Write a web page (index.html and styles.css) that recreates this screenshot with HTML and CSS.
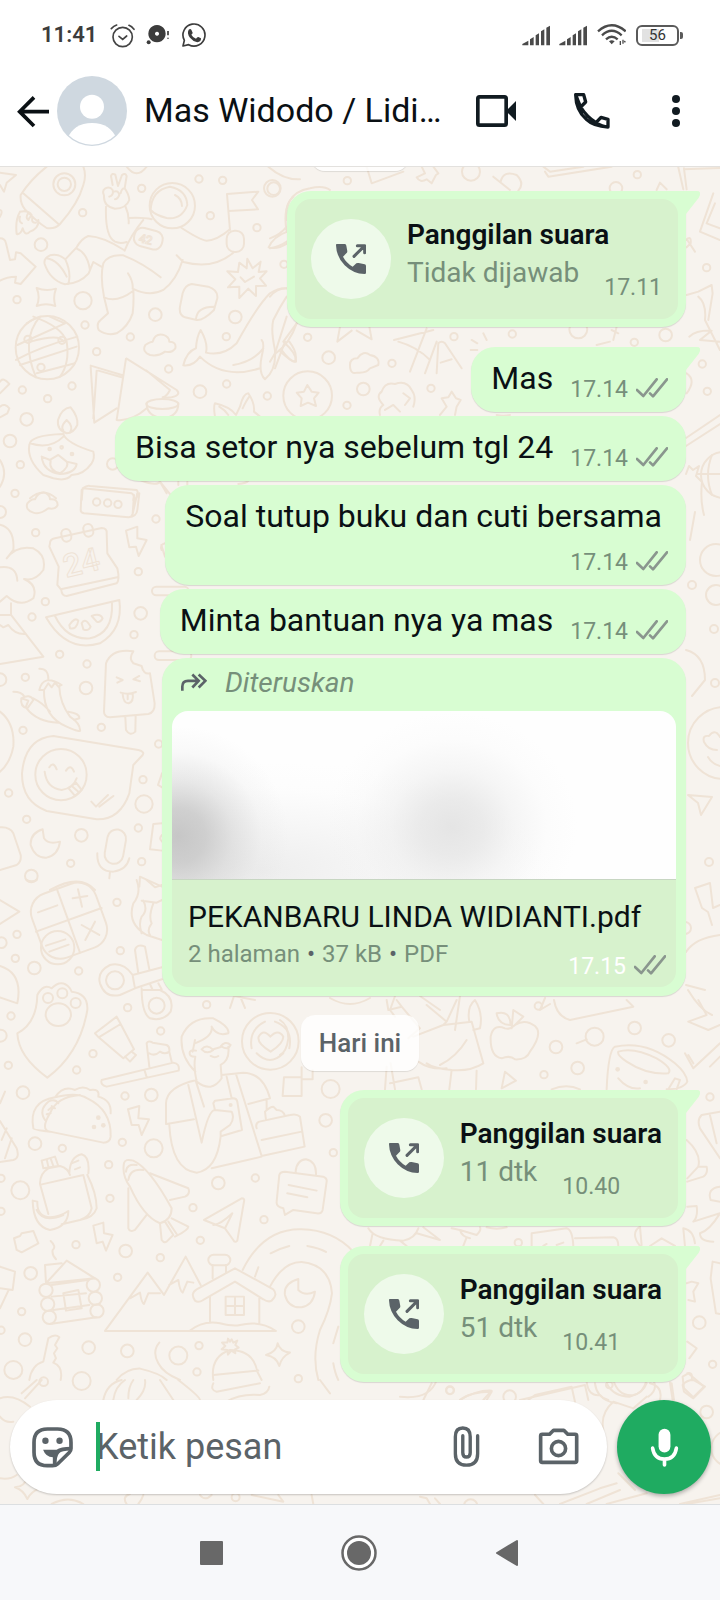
FILE: index.html
```html
<!DOCTYPE html>
<html lang="id">
<head>
<meta charset="utf-8">
<meta name="viewport" content="width=device-width, initial-scale=1">
<title>Mas Widodo</title>
<link rel="stylesheet" href="styles.css">
</head>
<body>
<svg class="defs" aria-hidden="true">
  <symbol id="ticks" viewBox="0 0 96 60"><path d="M3 36L22 54L62 4M42 46L51 55L93 4" fill="none" stroke="currentColor" stroke-width="8" stroke-linejoin="round" stroke-linecap="round"/></symbol>
  <symbol id="call" viewBox="0 0 90 90"><path d="M2 0H26Q31 0 31 5L34 22Q34 26 31 28L21 38Q31 57 50 68L61 58Q64 56 68 57L86 61Q90 62 90 66V86Q90 90 86 90Q52 90 26 64Q1 38 0 4Q0 0 2 0Z" fill="currentColor"/><path d="M54 37L84 7M64 5H86V26" fill="none" stroke="currentColor" stroke-width="9" stroke-linejoin="round" stroke-linecap="round"/></symbol>
  <symbol id="tail" viewBox="0 0 14 24"><path d="M0 0H11Q15 0 14 4Q13 7 11 9L0 23Z" fill="currentColor"/></symbol>
</svg>

<div class="status">
  <span class="clock">11:41</span>
  <svg class="s-alarm" viewBox="330 66 75 75"><g fill="none" stroke="#444" stroke-width="5" stroke-linecap="round"><circle cx="368" cy="108" r="29"/><path d="M357 106L368 115L380 105M334 83Q341 75 350 72M402 85Q395 76 387 73"/></g></svg>
  <svg class="s-chat" viewBox="438 66 75 75"><path fill-rule="evenodd" fill="#3c3c3c" d="M471 72A26 26 0 1 1 470.900 72ZM471 92A6 6 0 1 0 471.100 92Z"/><circle cx="446" cy="124" r="6" fill="#3c3c3c"/><path d="M504 90V103M504 110V113" stroke="#3c3c3c" stroke-width="5"/></svg>
  <svg class="s-wa" viewBox="543 63 78 78"><path fill="none" stroke="#3c3c3c" stroke-width="5" stroke-linejoin="round" d="M549 135L553 118A33 33 0 1 1 566 131Z"/><path fill="#3c3c3c" d="M566 86Q571 82 574 86L578 95Q578 98 574 101Q579 110 588 113Q592 107 595 108L603 112Q604 122 592 124Q580 122 570 110Q560 97 566 86Z"/></svg>
  <span class="grow"></span>
  <svg class="s-signal" viewBox="484 72 87 63"><path fill="#4a4a4a" d="M485 133V129L503 119V133ZM508 133V115L519 108V133ZM525 133V103L535 97V133ZM541 133V91L551 85V133ZM557 133V80L568 74V133Z"/></svg>
  <svg class="s-signal" viewBox="484 72 87 63"><path fill="#4a4a4a" d="M485 133V129L503 119V133ZM508 133V115L519 108V133ZM525 133V103L535 97V133ZM541 133V91L551 85V133ZM557 133V80L568 74V133Z"/></svg>
  <svg class="s-wifi" viewBox="711 72 87 72"><g fill="none" stroke="#4a4a4a" stroke-width="7"><path d="M714 97Q755 61 797 97M726 109Q755 82 785 109M738 121Q755 105 773 121"/><path d="M781 126V138M789 122V134M793 126L796 130" stroke-width="4"/></g><path fill="#4a4a4a" d="M747 127Q755 121 764 127L755 136Z"/></svg>
  <span class="battery"><span class="cell">56</span></span>
</div>

<header class="top">
  <button class="ib back" aria-label="Kembali"><svg viewBox="51 283 99 99"><path d="M102 290L59 333L102 376M58 333H147" fill="none" stroke="#0a1014" stroke-width="11"/></svg></button>
  <svg class="avatar" viewBox="0 0 210 210"><defs><clipPath id="disc"><circle cx="105" cy="105" r="101"/></clipPath></defs><circle cx="105" cy="105" r="105" fill="#cfd8e0"/><circle cx="105" cy="92" r="36" fill="#fff"/><path clip-path="url(#disc)" fill="#fff" d="M30 190Q50 141 105 141T180 190V210H30Z"/></svg>
  <h1>Mas Widodo / Lidi…</h1>
  <button class="ib video" aria-label="Panggilan video"><svg viewBox="348 285 120 96"><rect x="353.500" y="290.500" width="85" height="85" rx="5" fill="none" stroke="#111b21" stroke-width="11"/><path fill="#111b21" d="M440 331L468 303V363L440 335Z"/></svg></button>
  <button class="ib phone" aria-label="Panggilan suara"><svg viewBox="640 276 114 114"><path fill="none" stroke="#111b21" stroke-width="10" stroke-linejoin="round" d="M648 284H672L678 306L663 321Q655 304 648 284ZM663 321Q680 349 709 368M709 368L724 352L745 358V381Q728 380 709 368ZM648 284Q649 331 680 358Q702 379 745 381"/></svg></button>
  <button class="ib dots" aria-label="Menu"><svg viewBox="0 0 24 96"><g fill="#111b21"><circle cx="12" cy="12" r="12"/><circle cx="12" cy="48" r="12"/><circle cx="12" cy="84" r="12"/></g></svg></button>
</header>

<main class="chat">
  <svg class="doodles" viewBox="0 167 720 1337" preserveAspectRatio="xMidYMin slice" aria-hidden="true">
    <g transform="translate(0 160) scale(.3333)">
      <path d="M62 105Q90 60 140 20M62 105Q60 130 75 148Q110 185 140 204Q165 208 180 192Q235 130 250 75Q260 45 250 20M68 98L178 194M60 155Q85 150 95 165M60 155Q45 180 50 222Q62 225 68 205Q75 230 90 215Q118 205 115 180M85 158Q75 175 85 180Q92 165 98 170Q92 190 108 188M60 170Q55 185 66 190"/>
      <circle cx="193" cy="73" r="33"/><circle cx="193" cy="73" r="20"/>
      <path d="M0 38L48 45L20 68L12 95L0 75M0 150Q10 152 0 170M0 235Q15 235 18 250L30 300L45 298L48 277L62 280L107 320L62 372L45 368L48 350Q20 350 0 362M110 384Q138 395 168 386Q158 412 166 438Q138 428 110 438Q122 412 110 384Z"/>
      <path d="M338 75L333 48Q336 38 346 44L354 78L366 45Q376 38 380 48L374 85Q386 100 388 120Q378 146 345 146Q310 140 312 106Q305 92 316 85Q330 78 338 90Q342 105 328 110M342 95Q355 90 358 105Q352 118 345 118M362 100Q365 85 374 85M318 140Q315 230 345 245Q360 252 380 246M376 138Q388 165 386 190M388 174Q430 172 455 178M374 272Q390 230 430 180M545 204Q600 240 620 242Q650 242 690 208M700 278Q640 330 550 306L530 286M548 300Q530 360 490 390Q450 412 398 386Q400 365 384 340M400 388Q402 430 398 460Q385 500 350 520Q320 528 296 510Q288 490 302 480L324 460L312 410Q300 350 310 310Q325 282 370 286Q430 310 482 352M312 412Q350 430 398 394M372 270Q310 230 265 228Q245 235 230 262L196 298Q175 280 150 286Q130 295 134 312Q150 360 195 373Q240 370 266 340L280 306L304 320M196 298Q215 340 205 372M230 266Q262 278 270 330M140 295Q175 300 200 350"/>
      <circle cx="517" cy="137" r="68"/><path d="M452 150Q455 90 510 80Q560 90 562 135Q545 180 500 174Q465 165 452 150M525 105Q545 115 546 138"/>
      <rect x="402" y="208" width="86" height="56" rx="24" transform="rotate(15 445 236)"/>
      <path d="M690 210L681 102L775 95L756 120L774 148L686 153"/><rect x="680" y="212" width="52" height="64" rx="24"/>
      <path d="M742 296L758 325L782 305L776 336L800 334L780 355L798 377L768 378L768 408L745 386L718 414L718 380L684 382L706 358L682 334L714 336L718 308L740 325ZM722 352L735 366L762 350M575 372L625 380Q655 390 652 415L642 450Q610 482 590 480L555 472Q536 465 540 440L548 400Q555 375 575 372ZM588 478Q590 440 642 440"/>
      <circle cx="142" cy="563" r="95"/><path d="M80 490Q95 480 120 470Q60 540 108 652M100 470Q185 500 200 545Q210 610 180 650M150 470Q170 480 195 490M52 555L195 490M48 600Q120 560 232 530M60 615L230 560M110 640L225 610M92 545Q180 520 190 545"/><circle cx="84" cy="538" r="11"/><circle cx="186" cy="541" r="11"/><circle cx="123" cy="622" r="11"/>
      <path d="M450 585Q425 575 436 555Q450 545 458 545Q465 520 488 524Q508 530 508 545Q530 545 526 565Q515 580 495 575Q475 590 450 585ZM550 616Q560 575 588 565Q590 530 602 510Q625 550 618 578Q670 590 710 550Q770 440 810 400Q840 380 870 386M550 616Q580 620 600 590Q670 660 780 625M700 615Q760 605 790 565M785 540Q795 550 785 590Q775 640 795 658Q830 630 825 570Q812 510 820 480Q840 440 860 410M825 582Q870 550 890 490M842 575Q880 610 885 605Q895 580 868 545M806 262Q820 230 862 215M806 262Q830 270 862 250"/>
      <path d="M272 620L283 788L350 745M272 617L368 646M290 632L280 775M295 632L365 652M378 596L350 780Q395 785 440 745M380 596L530 690Q545 705 515 712L490 714M440 632L510 690Q500 710 488 712M440 730Q440 770 490 775Q535 770 535 730"/><ellipse cx="487" cy="732" rx="48" ry="15"/>
      <path d="M200 820Q170 810 174 780Q185 745 212 742Q235 770 232 795Q220 820 200 820M190 812Q180 800 200 780Q222 800 210 818M88 855Q90 825 190 822Q200 850 280 875Q285 895 275 910Q250 945 215 945Q200 965 160 955L130 945Q80 900 88 855ZM90 850Q150 870 190 830M125 890L150 900L175 885L200 905L230 912Q225 940 180 942Q130 935 125 890M152 902Q145 930 180 940Q210 920 200 905"/><circle cx="149" cy="867" r="4"/><circle cx="185" cy="862" r="4"/><circle cx="216" cy="882" r="4"/>
      <path d="M645 770Q640 740 645 730Q690 740 708 765L720 740Q730 700 745 700Q765 730 762 755L780 770M658 740Q675 750 685 765M728 745Q740 720 748 710M0 665Q10 650 28 672L0 700M0 740Q15 728 28 745L22 760L0 772M0 900Q25 940 0 980M380 20Q410 60 440 20M805 20Q850 60 900 58M860 180Q855 130 880 110"/>
      <path d="M245 1020L248 985Q262 975 270 978L410 990Q420 1000 405 1020M250 985L395 1000Q405 1005 400 1020M90 1015Q130 980 168 1015M420 960Q470 980 480 965L500 1000M480 965L512 1005M535 965V975M562 965V975M715 972Q740 970 745 962"/>
      <g><circle cx="425" cy="85" r="11"/><circle cx="597" cy="57" r="11"/><circle cx="668" cy="61" r="11"/><circle cx="821" cy="86" r="19"/><circle cx="248" cy="158" r="11"/><circle cx="631" cy="167" r="11"/><circle cx="771" cy="203" r="11"/><circle cx="123" cy="254" r="19"/><circle cx="249" cy="422" r="26"/><circle cx="51" cy="419" r="11"/><circle cx="466" cy="464" r="19"/><circle cx="706" cy="471" r="19"/><circle cx="255" cy="495" r="11"/><circle cx="391" cy="531" r="11"/><circle cx="290" cy="575" r="11"/><circle cx="679" cy="530" r="11"/><circle cx="506" cy="627" r="11"/><circle cx="216" cy="678" r="11"/><circle cx="67" cy="690" r="11"/><circle cx="143" cy="716" r="11"/><circle cx="600" cy="695" r="19"/><circle cx="680" cy="672" r="11"/><circle cx="802" cy="708" r="11"/><circle cx="80" cy="778" r="19"/><circle cx="30" cy="843" r="19"/><circle cx="61" cy="914" r="11"/><circle cx="338" cy="912" r="17"/><circle cx="852" cy="313" r="11"/></g>
    </g>
    <text x="139" y="244" font-size="12" transform="rotate(12 148 239)">42</text>
    <g transform="translate(0 490) scale(.3333)">
      <path d="M100 68Q75 60 82 40Q95 25 105 28Q115 5 135 8Q150 15 150 28Q172 25 173 45Q165 60 145 55Q120 75 100 68ZM245 0L242 60Q242 68 252 70L385 82Q395 82 398 72L412 10M385 82Q410 80 412 60L418 10M398 72L402 15"/><circle cx="290" cy="36" r="11"/><circle cx="323" cy="39" r="11"/><circle cx="354" cy="43" r="11"/>
      <path d="M0 104Q45 115 40 180L20 205Q50 165 100 175Q140 195 130 240Q105 275 72 267Q115 285 100 325Q60 355 20 318L0 335M0 232Q50 225 52 272M33 340V375L130 500L0 522M33 375H0M0 405L10 412L25 405Q45 435 78 432"/>
      <path d="M150 160Q150 148 165 145L305 114Q322 115 320 130L322 190L352 235Q360 270 350 280L200 318Q185 318 184 300L172 285L176 230L148 170ZM182 298L352 262"/><rect x="185" y="117" width="28" height="38" rx="14" transform="rotate(-12 199 136)"/><rect x="251" y="102" width="28" height="38" rx="14" transform="rotate(-12 265 121)"/>
      <path d="M378 122L412 110V145L440 150L416 198L408 170L388 172ZM138 382L358 330Q370 420 300 460Q200 490 138 382ZM165 378Q200 450 270 445Q340 430 336 340M208 405Q225 380 235 392Q230 420 210 415ZM245 400Q255 380 272 410Q265 425 250 418ZM275 378Q300 368 308 385Q300 400 290 395ZM484 165L495 200M485 180Q478 165 495 160"/>
      <rect x="456" y="290" width="110" height="26" rx="13"/><rect x="464" y="484" width="110" height="26" rx="13"/>
      <path d="M312 665L318 520Q335 475 400 484Q385 505 400 520L425 528Q430 555 450 550L464 640Q465 668 445 672L330 682Q312 680 312 665ZM376 682L378 720Q390 740 406 725L407 678M350 562L368 570L352 578M418 558L400 568L420 574M362 608Q385 615 408 606M368 612Q370 640 386 640Q402 635 398 610M383 612V628"/>
      <path d="M40 605Q65 605 72 618M118 536Q145 535 145 568M118 600Q130 550 185 585L175 590L165 578L155 592L145 580L132 600ZM132 600Q130 680 200 710Q245 730 240 720Q240 700 210 680Q180 640 178 592M64 625Q90 610 100 630L82 655Q60 650 64 625M80 655Q110 695 175 698M100 625Q130 640 150 665M205 665Q240 670 238 685L222 690M64 625L85 632L78 650"/>
      <path d="M160 738L415 780Q435 785 428 795L400 825L388 910Q360 990 290 988L140 963Q65 935 66 850Q75 745 160 738ZM274 935L288 950L324 915M298 950L340 918M134 845Q140 895 185 900Q220 895 230 865M148 832Q160 812 170 838M198 842Q212 820 222 845M206 895L228 878L245 900L225 918ZM218 890L235 905"/><circle cx="183" cy="854" r="77"/>
      <path d="M128 1018Q90 1030 92 1065Q105 1105 140 1103Q175 1095 180 1055Q145 1065 132 1045ZM328 1165L330 1145M292 1090Q290 1145 340 1145Q380 1140 388 1105M486 1000L460 1002L450 1078L486 1082M486 1035Q475 1045 486 1055M418 1190L420 1160L486 1190M150 1200Q240 1150 285 1200M0 665Q45 700 40 770Q30 820 0 845M0 1012Q30 1010 40 1030L62 1095Q65 1115 50 1125L0 1140M486 850L474 885L486 892"/><rect x="318" y="1018" width="56" height="104" rx="28" transform="rotate(10 346 1070)"/>
      <g><circle cx="45" cy="10" r="11"/><circle cx="107" cy="128" r="11"/><circle cx="136" cy="335" r="11"/><circle cx="96" cy="381" r="11"/><circle cx="422" cy="370" r="19"/><circle cx="468" cy="87" r="11"/><circle cx="415" cy="245" r="11"/><circle cx="402" cy="434" r="11"/><circle cx="179" cy="493" r="11"/><circle cx="261" cy="522" r="11"/><circle cx="76" cy="562" r="11"/><circle cx="0" cy="569" r="19"/><circle cx="0" cy="66" r="18"/><circle cx="258" cy="594" r="19"/><circle cx="69" cy="721" r="11"/><circle cx="304" cy="712" r="11"/><circle cx="476" cy="762" r="11"/><circle cx="429" cy="869" r="11"/><circle cx="26" cy="909" r="11"/><circle cx="432" cy="942" r="26"/><circle cx="80" cy="988" r="11"/><circle cx="244" cy="1036" r="19"/><circle cx="415" cy="1014" r="11"/><circle cx="212" cy="1120" r="11"/><circle cx="425" cy="1115" r="11"/><circle cx="94" cy="1158" r="19"/></g>
    </g>
    <text x="63" y="573" font-size="32" transform="rotate(-14 84 562)">24</text>
    <g transform="translate(0 880) scale(.3333)">
      <rect x="105" y="20" width="204" height="204" rx="58" transform="rotate(-20 207 122)"/><path d="M170 25L240 218M108 155L305 84M114 97L172 76M218 55L262 48M234 28L246 80M245 135L298 165M285 125L256 180M138 197L196 178M148 215L206 194"/><circle cx="173" cy="203" r="50"/>
      <path d="M410 0Q425 40 400 70Q380 130 440 165L486 180M425 62L470 68L486 60M430 62Q445 90 425 110Q415 130 425 160M460 70Q445 110 455 130Q440 150 450 165M0 60L58 95L0 132M0 258Q70 280 52 370L0 352M80 0Q95 8 110 0M440 0L465 22L486 15"/>
      <path d="M52 460Q110 430 112 345Q130 310 155 325Q185 295 210 325L215 335Q265 340 262 390Q240 520 142 593Q55 530 52 460Z"/><ellipse cx="175" cy="404" rx="38" ry="34"/><circle cx="144" cy="354" r="15"/><circle cx="187" cy="340" r="15"/><circle cx="227" cy="369" r="15"/>
      <circle cx="345" cy="301" r="27"/><path d="M398 285Q370 245 330 255Q290 275 300 310Q315 355 360 345L405 325Q400 300 398 285L486 262M405 325L486 298M415 280L405 210Q410 190 435 200L448 268M425 325Q425 400 450 415Q490 425 512 395Q525 350 480 330L430 330M450 312L458 330M475 310L485 328"/><circle cx="470" cy="377" r="24"/>
      <path d="M285 460L350 410L362 432L296 472ZM296 472L370 535L402 508L362 432M375 530L390 545L408 525L395 515M305 600L520 548Q540 550 536 572L320 620Q300 615 305 600ZM434 572L440 592M448 560L440 490Q445 480 458 488L500 495Q510 500 508 515L515 545M448 520Q465 530 480 515Q495 525 508 515"/>
      <path d="M586 575Q540 530 545 470Q570 410 640 415Q690 440 685 460Q650 470 635 440Q640 470 585 490M585 480L578 515M590 605Q580 560 586 530Q565 530 570 515Q575 508 588 512M590 605Q635 640 665 595L662 555M662 555Q690 540 685 500M605 508Q620 490 640 510Q620 525 605 508M640 508L660 502Q675 480 692 495Q685 512 665 500M632 528Q645 535 655 528M590 600Q500 620 498 670V732M565 615L605 788M588 605L612 680M500 732L582 718M508 735Q515 870 590 878Q650 870 662 770M605 788Q625 690 645 690L640 670L645 662L700 655Q710 655 712 665L726 750L665 768M645 690L695 695Q705 715 690 735L662 755V770M680 590L695 655M665 585L730 578Q790 580 810 655L745 672M708 582L785 828L914 800L900 710Q890 700 870 705L778 725Q765 730 770 745M785 780L905 755M798 720L795 695Q810 680 820 680L830 690Q850 690 855 708M635 865L785 830M800 662V690"/><circle cx="692" cy="675" r="3"/>
      <circle cx="811" cy="484" r="85"/><path d="M812 515Q770 490 776 470Q790 445 811 470Q835 445 850 470Q850 490 812 515ZM755 505Q745 450 795 425M825 425Q880 445 868 505M770 520Q810 560 850 520M852 592H905V648H848ZM905 600V562M905 598H938V570"/>
      <path d="M100 745Q85 665 165 652Q230 635 262 655Q335 690 332 770Q330 788 310 788L150 755Q100 750 100 745ZM150 755Q120 750 150 700Q170 650 240 645M165 652Q190 615 225 630Q250 615 270 630Q300 625 295 650Q335 660 332 700M135 720Q115 690 145 665Q165 655 175 670M145 690L155 682M140 703L152 700M155 678L165 685"/><g class="solid"><circle cx="295" cy="713" r="7"/><circle cx="310" cy="736" r="7"/><circle cx="282" cy="741" r="7"/></g>
      <path d="M384 688L418 678L415 715L447 718L425 765L416 735L395 735ZM0 723L50 805Q60 835 40 840L0 846M20 745L5 780M35 775L15 835M120 910Q120 880 145 865L180 858Q205 865 210 885M120 912L145 1002M122 914L250 885L275 985Q270 1010 240 1020L185 1033M125 842L130 865M125 842L165 830L175 858L130 865M140 838L145 860M152 835L160 858M208 880Q210 830 245 823Q270 830 265 880M215 850L235 842M225 868L240 862M262 885Q290 940 290 985Q280 1015 240 1020M98 962L112 965Q110 1010 150 1012Q180 1010 205 993Q205 1040 150 1050Q100 1040 98 962M110 990Q130 1030 190 1005M280 1037L310 1028L312 1060L338 1065L318 1112L308 1085L290 1090ZM42 1075L60 1068L65 1060L100 1053L115 1090L65 1117L50 1110Z"/>
      <path d="M372 850Q375 835 400 842Q450 865 515 985Q515 1020 480 1030Q430 1010 390 920Q365 885 372 850ZM378 875Q380 850 410 855M385 900Q390 865 430 870M450 880L565 925Q572 942 555 950L510 960M385 925V1045Q390 1058 405 1050L440 1005M480 1030L485 1080Q492 1090 500 1085L520 1065L495 1025M515 1015L565 1040Q565 1050 525 1070M505 1025L530 1062M612 1020L725 955Q735 955 732 965L712 1082Q705 1090 700 1080L675 1045ZM675 1045Q690 1015 697 1000Q660 1035 640 1035M838 885Q840 875 855 875L970 890Q982 895 980 905L968 990Q965 1002 950 1000L880 990L855 1005L850 985Q828 980 830 965ZM887 875Q890 840 918 838Q950 845 948 885M866 915L950 932M862 940L922 952"/>
      <path d="M152 1083Q170 1100 158 1110Q155 1125 168 1138M138 1210L135 1155L185 1150M138 1210L200 1142L285 1195ZM155 1215L262 1200M155 1250L258 1240M160 1290L268 1275M150 1332L290 1312M190 1240L235 1230L245 1285L198 1292Z"/><circle cx="138" cy="1231" r="20"/><circle cx="143" cy="1273" r="20"/><circle cx="148" cy="1312" r="20"/><circle cx="280" cy="1215" r="20"/><circle cx="286" cy="1255" r="20"/><circle cx="291" cy="1293" r="20"/>
      <path d="M315 1353H826M315 1353L443 1178L492 1245L557 1130L602 1215M390 1255L420 1238Q425 1270 432 1272L445 1240L480 1240M508 1215L535 1200Q540 1235 548 1238L562 1205L580 1208M585 1262Q570 1240 590 1228L705 1165L820 1228Q835 1245 815 1262Q805 1268 790 1258L705 1205L610 1260Q595 1270 585 1262ZM630 1250V1325M778 1250V1330M568 1353Q610 1320 660 1330Q700 1340 720 1335Q780 1320 828 1353M638 1195V1155M678 1180V1155M677 1250H732V1305H677ZM705 1250V1305M677 1278H732"/><rect x="625" y="1124" width="66" height="32" rx="16"/>
      <path d="M728 1170Q790 1045 905 1048Q1000 1050 1060 1115M765 1190L775 1162M812 1120Q840 1105 868 1098M922 1098Q960 1105 978 1116M810 1220Q850 1145 905 1146Q990 1155 996 1240Q990 1290 960 1350Q935 1430 955 1500M1015 1340L1000 1390M1000 1450Q1005 1480 1015 1500M895 1197Q850 1210 855 1245Q865 1285 905 1282Q940 1275 945 1235Q915 1250 895 1230ZM833 1390Q840 1415 870 1418Q845 1430 838 1458Q830 1430 798 1425Q830 1415 833 1390ZM640 1500Q630 1430 690 1410Q760 1410 772 1475L785 1500M640 1485L775 1472M0 1160L45 1175L38 1230L0 1225M25 1232L0 1285M690 1385L695 1378L700 1388L712 1382L706 1395L716 1403L705 1408L706 1420L694 1412L684 1424L682 1410L665 1408L676 1398L666 1388L682 1388L684 1376ZM145 1375Q165 1360 178 1372L165 1395L172 1405L162 1420L168 1435L160 1448Q190 1460 182 1500M145 1375L130 1445Q95 1455 88 1500M350 1500Q380 1465 420 1466Q480 1480 500 1500M478 1388Q455 1415 475 1450Q490 1480 540 1500M15 635L0 670"/>
      <g><circle cx="351" cy="67" r="11"/><circle cx="51" cy="163" r="11"/><circle cx="4" cy="188" r="16"/><circle cx="46" cy="235" r="11"/><circle cx="103" cy="264" r="19"/><circle cx="236" cy="273" r="11"/><circle cx="361" cy="212" r="11"/><circle cx="383" cy="383" r="11"/><circle cx="33" cy="408" r="11"/><circle cx="482" cy="453" r="11"/><circle cx="620" cy="374" r="11"/><circle cx="2" cy="467" r="18"/><circle cx="25" cy="556" r="11"/><circle cx="279" cy="521" r="11"/><circle cx="230" cy="570" r="11"/><circle cx="69" cy="638" r="19"/><circle cx="454" cy="645" r="19"/><circle cx="375" cy="648" r="11"/><circle cx="105" cy="791" r="19"/><circle cx="187" cy="805" r="11"/><circle cx="461" cy="805" r="27"/><circle cx="367" cy="787" r="11"/><circle cx="326" cy="854" r="11"/><circle cx="61" cy="931" r="27"/><circle cx="330" cy="955" r="11"/><circle cx="655" cy="909" r="19"/><circle cx="766" cy="894" r="11"/><circle cx="992" cy="627" r="27"/><circle cx="977" cy="721" r="19"/><circle cx="1000" cy="818" r="11"/><circle cx="792" cy="1019" r="11"/><circle cx="579" cy="983" r="11"/><circle cx="601" cy="1081" r="11"/><circle cx="228" cy="1094" r="11"/><circle cx="377" cy="1113" r="19"/><circle cx="481" cy="1133" r="11"/><circle cx="92" cy="1180" r="19"/><circle cx="353" cy="1192" r="11"/><circle cx="65" cy="1295" r="11"/><circle cx="3" cy="1351" r="11"/><circle cx="75" cy="1379" r="19"/><circle cx="266" cy="1403" r="19"/><circle cx="382" cy="1413" r="19"/><circle cx="535" cy="1427" r="27"/><circle cx="597" cy="1397" r="11"/><circle cx="591" cy="1476" r="11"/><circle cx="40" cy="1470" r="27"/><circle cx="895" cy="1340" r="19"/><circle cx="3" cy="895" r="11"/><circle cx="3" cy="994" r="11"/></g>
    </g>
    <g transform="translate(270 160) scale(.3333)">
      <path d="M290 20L305 70L400 35M455 20L465 40L440 52Q450 70 470 58L485 70L498 45L505 40L490 20M825 35L835 50L1025 20M820 20L840 35L940 20M670 50L720 90M692 65Q700 30 740 45Q765 70 745 92M1225 22L1240 88M1242 25L1250 88M1242 28L1350 24M1160 90L1170 68L1190 88M1330 100L1290 215L1350 240M1335 130L1310 190L1350 205M1248 240Q1265 225 1262 250L1250 262M1252 240L1275 275M50 215Q30 100 120 85Q160 75 180 90M0 235Q30 225 50 200M0 265Q30 260 50 245M0 410Q20 385 50 385M50 470L15 580L0 605M80 490L40 545Q80 580 78 605Q60 605 35 570M210 500L202 545L245 512M260 512L305 538L298 500M45 545L15 625M1250 405L1285 395L1325 375L1328 400L1315 480M1285 410Q1310 430 1305 480L1350 570M1258 530Q1280 510 1325 512L1290 540L1350 545M1025 510L1045 520M1030 540L1040 500M980 555L1020 545M605 540L622 550M640 520L650 540M602 570L622 570"/>
      <path d="M372 540L490 510M385 545Q440 560 480 600M420 635L470 505M465 640L500 545M500 640L505 550Q515 540 525 550L575 625M512 608L545 598M240 615Q240 595 262 595Q280 570 300 585Q330 590 325 615L300 625Q290 640 262 638Q240 645 240 615ZM112 675L125 695L146 698L132 715L138 738L114 728L92 738L95 715L80 698L102 695Z"/><circle cx="113" cy="707" r="73"/>
      <path d="M330 765Q325 745 340 735Q315 710 335 695Q345 665 375 672Q410 660 425 690Q440 710 430 740M345 750L370 735L390 755M400 700L420 715L405 735M510 765L530 740L515 715L535 712L545 695L558 715L572 720L560 740L555 765M1250 640Q1280 660 1250 700M680 765Q700 770 720 765"/><circle cx="7" cy="85" r="25"/>
      <g><circle cx="232" cy="62" r="11"/><circle cx="603" cy="35" r="27"/><circle cx="1102" cy="44" r="11"/><circle cx="1038" cy="85" r="19"/><circle cx="113" cy="532" r="11"/><circle cx="176" cy="593" r="19"/><circle cx="552" cy="530" r="11"/><circle cx="727" cy="522" r="11"/><circle cx="925" cy="508" r="27"/><circle cx="1187" cy="525" r="19"/><circle cx="1093" cy="547" r="11"/><circle cx="280" cy="687" r="19"/><circle cx="366" cy="610" r="11"/><circle cx="483" cy="685" r="11"/><circle cx="231" cy="736" r="11"/><circle cx="1297" cy="612" r="11"/><circle cx="1312" cy="694" r="11"/><circle cx="1310" cy="323" r="11"/></g>
    </g>
    <g class="thin">
      <path d="M686 438L720 415M686 446L720 424M686 474L689 466L693 470L699 466L696 476L702 482Q700 500 704 515M690 540L695 512M712 455Q704 475 712 495M698 474H720M686 650Q705 655 705 680L692 696M704 742Q702 735 709 736Q715 728 720 737M704 742Q708 750 717 750M708 757Q712 764 720 766M688 795L712 797L701 815L698 803ZM695 888L710 883L713 908L720 905M695 888L702 908L708 912L712 925M686 952Q695 938 720 935M686 985L705 990M688 990Q700 1010 712 1015"/>
      <circle cx="724" cy="475" r="23"/><circle cx="716" cy="560" r="16"/><circle cx="716" cy="595" r="10"/><circle cx="724" cy="743" r="36"/>
      <circle cx="692" cy="585" r="4"/><circle cx="714" cy="629" r="4"/><circle cx="715" cy="683" r="4"/><circle cx="709" cy="862" r="4"/><circle cx="685" cy="928" r="6"/>
      <path d="M230 1008L234 996L255 1000M240 996L245 1008M330 998Q350 1010 370 998M395 996L390 1010M420 996L440 1010M460 996L455 1030M545 998L540 1010L550 1004"/>
    </g>
    <g transform="translate(280 1000) scale(.3333)">
      <path d="M0 60Q25 75 25 115Q20 155 0 165M320 0L325 30L365 20L350 0M330 30L345 50M365 20L420 85L385 115M440 15L500 65L530 0M500 65L490 75L400 110M415 185Q450 210 500 205M490 75L575 65L610 190Q570 215 515 210Q460 205 440 190M560 120Q530 170 480 195M515 210L508 268M590 212L588 268M568 65Q560 20 585 0Q610 40 600 85L580 90M332 190L345 268M330 250L415 232L425 268M320 200L315 268M675 85Q640 70 632 110Q630 170 665 175Q690 165 705 178Q740 180 750 155Q790 100 765 78Q735 55 705 75Q690 90 675 85ZM695 85L700 30L730 50L705 75M650 40Q690 30 692 75Q655 75 650 40ZM665 265L675 215L708 242ZM822 0Q830 50 870 60L1060 20L1040 0M980 268Q985 150 1005 140Q1100 120 1185 190Q1220 220 1222 245Q1210 268 1160 268M1015 155Q1060 140 1130 175Q1180 205 1165 220Q1100 225 1040 185Q1010 165 1015 155ZM1015 235Q1045 270 1080 265M1165 268L1185 235L1200 240L1190 268M890 130L920 118M1215 160L1240 205L1320 130M1240 190L1225 165M1290 200L1320 170M1225 65L1285 90L1320 75M1225 65L1280 45L1255 0M815 268Q860 250 900 268"/>
      <g class="solid"><circle cx="1013" cy="208" r="7"/><circle cx="1097" cy="246" r="7"/></g>
      <path d="M1320 335L1265 345Q1250 360 1260 385L1320 475M1290 345L1310 430M1220 420Q1265 460 1255 500L1222 535M1255 500L1280 500Q1285 520 1270 530L1222 545M1320 560Q1280 565 1292 600L1320 605M1222 620L1250 618Q1255 650 1240 665L1320 640Q1290 690 1260 700Q1260 725 1300 725M1080 738Q1050 700 1080 680L1085 735M1110 738L1145 715L1185 738M1215 738L1210 685Q1240 690 1245 730M755 738V700L860 685Q878 690 880 738M885 715L1000 712Q1015 715 1015 738M790 738L800 732M830 735L850 728M265 685Q285 720 370 722Q405 715 415 685M270 738L278 700M300 738L310 722M360 722L380 738M430 682L480 720L410 700M515 685L540 690L590 705Q605 690 600 682M540 690Q545 710 570 715M550 738L560 712M620 682Q650 690 680 682M1320 790L1298 785L1292 835L1308 940L1320 942M1220 850L1235 845L1255 850L1240 875L1245 905L1225 900M1222 1025L1250 1045L1228 1075M1208 1130L1225 1120L1272 1160L1240 1192L1212 1165ZM1222 1120Q1240 1115 1235 1140"/>
      <g><circle cx="775" cy="18" r="11"/><circle cx="1064" cy="84" r="19"/><circle cx="1166" cy="121" r="19"/><circle cx="944" cy="110" r="27"/><circle cx="828" cy="141" r="19"/><circle cx="893" cy="204" r="19"/><circle cx="792" cy="224" r="11"/><circle cx="1290" cy="291" r="11"/><circle cx="1258" cy="968" r="19"/><circle cx="1298" cy="1093" r="11"/><circle cx="715" cy="728" r="11"/><circle cx="510" cy="1171" r="11"/><circle cx="55" cy="1136" r="11"/></g>
      <path d="M540 1200Q590 1170 635 1172L610 1200M720 1200L915 1155L925 1200M980 1150Q1000 1190 1050 1190Q1090 1180 1100 1150M945 1150Q950 1190 985 1200M1110 1150Q1150 1160 1140 1200M1170 1148L1178 1200M455 1150L430 1200"/>
    </g>
    <g transform="translate(0 1380) scale(.3333)">
      <path d="M75 55L125 0M65 40L110 0M0 55Q40 40 90 80M0 295Q30 300 50 285M0 110Q15 130 40 125M310 60Q320 10 365 0M340 60Q345 20 375 0M385 55Q385 20 400 0M410 60Q440 30 435 0M480 0L520 60M535 0Q600 50 600 60M640 10Q630 30 650 35L780 10M680 65Q720 40 780 45Q805 40 808 20M45 322Q75 320 82 290Q90 320 120 325Q92 335 82 357Q70 330 45 322ZM155 372Q205 345 250 372M380 372Q365 350 390 342M430 345Q425 360 415 372M755 345L850 365L835 345M935 345L940 372M960 0L990 40M600 345Q615 365 635 345"/><circle cx="131" cy="5" r="13"/><circle cx="245" cy="3" r="27"/><circle cx="707" cy="352" r="12"/>
    </g>
    <g transform="translate(400 1380) scale(.3333)">
      <path d="M0 50Q90 60 110 0M180 60Q210 35 275 35L260 60M385 60L405 45L515 20L525 65M560 5Q565 50 600 45Q615 65 650 70M640 0Q655 50 700 45Q730 40 740 0M760 0Q775 30 745 50M610 150Q600 100 640 65L700 85L740 50M655 280L705 330M650 310L600 325L480 372M660 330L560 372M620 372L740 340M405 345L430 372M840 372L960 345M860 372L960 355M815 10L822 60M848 15Q860 0 880 0L915 20L880 55L852 35ZM60 350L80 355L90 372M120 372L105 355"/><circle cx="150" cy="31" r="12"/><circle cx="329" cy="50" r="19"/><circle cx="920" cy="96" r="19"/><circle cx="628" cy="15" r="10"/><circle cx="988" cy="205" r="54"/><circle cx="212" cy="378" r="20"/>
    </g>
  </svg>

  <div class="chip chip-cut" aria-hidden="true"></div>

  <div class="messages">
    <section class="msg call tailed">
      <svg class="tail"><use href="#tail"/></svg>
      <div class="card">
        <span class="disc"><svg><use href="#call"/></svg></span>
        <div class="info"><strong>Panggilan suara</strong><div class="line"><span class="sub">Tidak dijawab</span><time>17.11</time></div></div>
      </div>
    </section>
    <section class="msg text spaced tailed">
      <svg class="tail"><use href="#tail"/></svg>
      <p>Mas</p><span class="meta"><time>17.14</time><svg class="ticks"><use href="#ticks"/></svg></span>
    </section>
    <section class="msg text">
      <p>Bisa setor nya sebelum tgl 24</p><span class="meta"><time>17.14</time><svg class="ticks"><use href="#ticks"/></svg></span>
    </section>
    <section class="msg text long">
      <p>Soal tutup buku dan cuti bersama</p><span class="meta"><time>17.14</time><svg class="ticks"><use href="#ticks"/></svg></span>
    </section>
    <section class="msg text">
      <p>Minta bantuan nya ya mas</p><span class="meta"><time>17.14</time><svg class="ticks"><use href="#ticks"/></svg></span>
    </section>
    <section class="msg doc">
      <div class="fwd"><svg viewBox="0 0 78 56"><path d="M4 53V40Q4 23 21 23H52M34 4L53 23L34 43M53 4L73 23L53 43" fill="none" stroke="#5b6368" stroke-width="8"/></svg><em>Diteruskan</em></div>
      <div class="preview"></div>
      <div class="file">
        <div class="name">PEKANBARU LINDA WIDIANTI.pdf</div>
        <div class="fline"><span class="fsub">2 halaman <b>•</b> 37 kB <b>•</b> PDF</span><span class="meta"><time>17.15</time><svg class="ticks"><use href="#ticks"/></svg></span></div>
      </div>
    </section>
    <div class="chip">Hari ini</div>
    <section class="msg call tailed">
      <svg class="tail"><use href="#tail"/></svg>
      <div class="card">
        <span class="disc"><svg><use href="#call"/></svg></span>
        <div class="info"><strong>Panggilan suara</strong><div class="line"><span class="sub">11 dtk</span><time>10.40</time></div></div>
      </div>
    </section>
    <section class="msg call spaced tailed">
      <svg class="tail"><use href="#tail"/></svg>
      <div class="card">
        <span class="disc"><svg><use href="#call"/></svg></span>
        <div class="info"><strong>Panggilan suara</strong><div class="line"><span class="sub">51 dtk</span><time>10.41</time></div></div>
      </div>
    </section>
  </div>

  <form class="composer">
    <div class="pill">
      <button type="button" class="ib sticker" aria-label="Stiker"><svg viewBox="95 143 122 122"><path fill="none" stroke="#5b6368" stroke-width="11" stroke-linejoin="round" d="M156 258H140Q101 258 101 218V189Q101 149 141 149H171Q211 149 211 189V207Q211 214 206 219L171 253Q166 258 156 258Z"/><circle cx="135" cy="184" r="9.500" fill="#5b6368"/><circle cx="177" cy="184" r="9.500" fill="#5b6368"/><path fill="#5b6368" d="M128 211H168Q180 202 211 202V213Q183 213 176 221Q168 228 168 258H157V233Q136 233 128 211Z"/></svg></button>
      <div class="field"><span class="caret"></span><input type="text" aria-label="Pesan" placeholder="Ketik pesan"></div>
      <button type="button" class="ib clip" aria-label="Lampirkan"><svg viewBox="160 140 80 122"><path fill="none" stroke="#5b6368" stroke-width="10" stroke-linecap="round" d="M233 169V222Q233 256 200 256Q167 256 167 222V172Q167 146 189 146Q211 146 211 172V219Q211 232 200 232Q189 232 189 219V169"/></svg></button>
      <button type="button" class="ib camera" aria-label="Kamera"><svg viewBox="415 148 124 112"><path fill="none" stroke="#5b6368" stroke-width="11" stroke-linejoin="round" d="M428 167H450L462 155H493L505 167H527Q532 167 532 172V247Q532 252 527 252H428Q423 252 423 247V172Q423 167 428 167Z"/><circle cx="477" cy="210" r="21.500" fill="none" stroke="#5b6368" stroke-width="11"/></svg></button>
    </div>
    <button type="button" class="mic" aria-label="Pesan suara"><svg viewBox="748 142 88 118"><rect x="774" y="144" width="36" height="72" rx="18" fill="#fff"/><path d="M756 203Q761 236 792 236Q823 236 828 203M792 236V254" fill="none" stroke="#fff" stroke-width="11" stroke-linecap="round"/></svg></button>
  </form>
</main>

<nav class="sysnav">
  <button aria-label="Terkini"><svg viewBox="0 0 36 36"><rect x="7" y="6" width="23" height="24" rx="1" fill="#686868"/></svg></button>
  <button aria-label="Beranda"><svg viewBox="0 0 36 36"><circle cx="18" cy="18" r="16.500" fill="#fff" stroke="#686868" stroke-width="2.500"/><circle cx="18" cy="18" r="12" fill="#686868"/></svg></button>
  <button aria-label="Kembali"><svg viewBox="0 0 36 36"><path d="M8 18L28 6V30Z" fill="#686868" stroke="#686868" stroke-width="2" stroke-linejoin="round"/></svg></button>
</nav>
</body>
</html>
```
FILE: styles.css
```css
* { box-sizing: border-box; }
body {
  margin: 0;
  min-height: 100vh;
  display: flex;
  flex-direction: column;
  font-family: Roboto, "Liberation Sans", sans-serif;
  color: #0a1014;
  background: #fff;
}
svg { display: block; flex: none; }
button { border: 0; padding: 0; margin: 0; background: none; flex: none; }
.ib svg { width: 100%; height: auto; }
.defs { position: absolute; width: 0; height: 0; }
.grow { flex: 1; }

.status {
  display: flex;
  align-items: center;
  height: 56px;
  padding: 14px 37px 0 41px;
}
.clock { font-size: 22px; line-height: 28px; font-weight: 600; color: #3c3c3c; margin-right: 13px; }
.s-alarm { width: 25px; height: 25px; margin-right: 11px; }
.s-chat { width: 25px; height: 25px; margin-right: 10px; }
.s-wa { width: 26px; height: 26px; }
.s-signal { width: 29px; height: 21px; margin-right: 8px; }
.s-wifi { width: 29px; height: 24px; margin: 0 10px 0 1px; }
.battery { position: relative; width: 43px; height: 21px; border: 2px solid #5a5a5a; border-radius: 6px; margin-right: 4px; padding: 2px 4px; }
.battery::after { content: ""; position: absolute; right: -6px; top: 5px; width: 3px; height: 7px; background: #5a5a5a; border-radius: 0 2px 2px 0; }
.cell { display: block; height: 13px; line-height: 13px; font-size: 15px; text-align: center; color: #333; background: linear-gradient(90deg, #e2e2e2 56%, transparent 56%); }

.top {
  display: flex;
  align-items: center;
  height: 111px;
  padding: 0 40px 0 17px;
  border-bottom: 1px solid #e3e1de;
}
.back { width: 33px; margin-right: 7px; }
.avatar { width: 70px; height: 70px; }
.top h1 { flex: 1; min-width: 0; margin: 0 0 2px 17px; font-size: 34px; line-height: 44px; font-weight: 400; white-space: nowrap; overflow: hidden; }
.video { width: 40px; margin-right: 57px; }
.phone { width: 38px; margin-right: 61px; }
.dots { width: 8px; }

.chat {
  position: relative;
  flex: 1;
  display: flex;
  flex-direction: column;
  overflow: hidden;
  background: #f7f3ee;
}
.doodles {
  position: absolute;
  inset: 0;
  width: 100%;
  height: 100%;
  fill: none;
  stroke: #efe3d6;
  stroke-width: 6;
  stroke-linejoin: round;
  stroke-linecap: round;
}
.doodles .solid { fill: #efe3d6; stroke: none; }
.doodles .thin { stroke-width: 2; }
.doodles text { stroke-width: 1; font-weight: 500; }

.messages {
  position: relative;
  flex: 1;
  display: flex;
  flex-direction: column;
  align-items: flex-end;
  gap: 4px;
  padding: 20px 34px 17px 10px;
}
.msg {
  position: relative;
  max-width: 100%;
  background: #d8fdd2;
  border-radius: 24px;
  box-shadow: 0 1px 1px rgba(0, 0, 0, .12);
}
.spaced { margin-top: 16px; }
.tailed { border-top-right-radius: 0; }
.tail { position: absolute; left: 100%; top: 0; width: 14px; height: 24px; color: #d8fdd2; }

.call { padding: 8px; }
.card { display: flex; padding: 17px 16px; gap: 16px; background: #d7f2cd; border-radius: 16px; }
.disc { display: grid; place-items: center; width: 80px; height: 80px; margin-top: 3px; border-radius: 50%; background: #eefaea; color: #5b6368; }
.disc svg { width: 30px; height: 30px; }
.info strong { display: block; font-size: 28px; line-height: 38px; font-weight: 600; }
.line { display: flex; gap: 25px; }
.sub { font-size: 28px; line-height: 38px; color: #768f7a; }
time { font-size: 23px; line-height: 28px; color: #768f7a; }
.line time { padding-top: 20px; }

.text { display: flex; align-items: flex-end; gap: 17px; padding: 9px 18px 8px 20px; }
.text p { margin: 0 0 4px; font-size: 32px; line-height: 44px; }
.long { flex-direction: column; gap: 7px; }
.long p { margin-right: 6px; }
.meta { display: flex; align-items: flex-end; gap: 8px; color: #8a968e; }
.ticks { width: 32px; height: 20px; margin-bottom: 6px; }

.doc { width: 524px; padding: 0 10px 9px; }
.fwd { display: flex; align-items: center; height: 53px; padding: 0 0 4px 9px; gap: 18px; }
.fwd svg { width: 26px; height: 19px; }
.fwd em { font-size: 28px; line-height: 38px; color: #768f7a; }
.preview {
  height: 169px;
  border-bottom: 1px solid #c7d6c2;
  border-radius: 16px 16px 0 0;
  background:
    radial-gradient(ellipse 110px 110px at 6px 125px, rgba(190, 190, 190, .85), rgba(192, 192, 192, .72) 25%, rgba(196, 196, 196, .38) 50%, rgba(210, 210, 210, .12) 76%, transparent),
    radial-gradient(ellipse 125px 115px at 280px 116px, rgba(226, 226, 226, .9), rgba(228, 228, 228, .75) 25%, rgba(232, 232, 232, .4) 50%, rgba(240, 240, 240, .15) 76%, transparent),
    radial-gradient(ellipse 290px 110px at 90px 160px, rgba(232, 232, 232, .75), rgba(236, 236, 236, .4) 45%, rgba(245, 245, 245, .15) 75%, transparent),
    #fefefe;
}
.file { padding: 17px 10px 6px 16px; background: #d7f2cd; border-radius: 0 0 16px 16px; }
.name { font-size: 30px; line-height: 40px; }
.fline { display: flex; justify-content: space-between; }
.fsub { font-size: 24px; line-height: 34px; color: #768f7a; }
.fsub b { margin: 0 1px; font-weight: 400; color: #5b6368; }
.fline .meta { padding-top: 16px; }
.fline time { color: #fff; }

.chip {
  align-self: center;
  display: grid;
  place-items: center;
  height: 56px;
  padding: 0 18px;
  margin: 15px 0 15px 24px;
  border-radius: 14px;
  background: rgba(255, 255, 255, .8);
  box-shadow: 0 1px 1px rgba(0, 0, 0, .1);
  font-size: 26px;
  font-weight: 500;
  color: #5b6368;
}
.chip-cut { position: relative; width: 98px; margin: -52px 0 0; }

.composer { position: relative; display: flex; gap: 10px; padding: 0 9px 10px 10px; }
.pill {
  flex: 1;
  min-width: 0;
  display: flex;
  align-items: center;
  height: 94px;
  padding: 0 28px 0 22px;
  border-radius: 47px;
  background: #fff;
  box-shadow: 0 1px 2px rgba(0, 0, 0, .2);
}
.sticker { width: 41px; margin-right: 23px; }
.field { position: relative; flex: 1; min-width: 0; }
.field input { display: block; width: 100%; border: 0; outline: 0; padding: 0; height: 50px; background: none; font: 400 36px/50px Roboto, "Liberation Sans", sans-serif; color: #0a1014; }
.field input::placeholder { color: #5b6368; opacity: 1; }
.caret { position: absolute; left: 0; top: 0; width: 4px; height: 49px; background: #1fab61; }
.clip { width: 27px; margin-right: 58px; }
.camera { width: 41px; }
.mic { display: grid; place-items: center; width: 94px; height: 94px; border-radius: 50%; background: #1fab61; box-shadow: 0 2px 4px rgba(0, 0, 0, .3); }
.mic svg { width: 29px; height: 39px; }

.sysnav {
  display: flex;
  justify-content: center;
  align-items: center;
  gap: 112px;
  height: 96px;
  padding-right: 2px;
  border-top: 1px solid #dcdfe1;
  background: #f7f8fa;
}
.sysnav svg { width: 36px; height: 36px; }
```
